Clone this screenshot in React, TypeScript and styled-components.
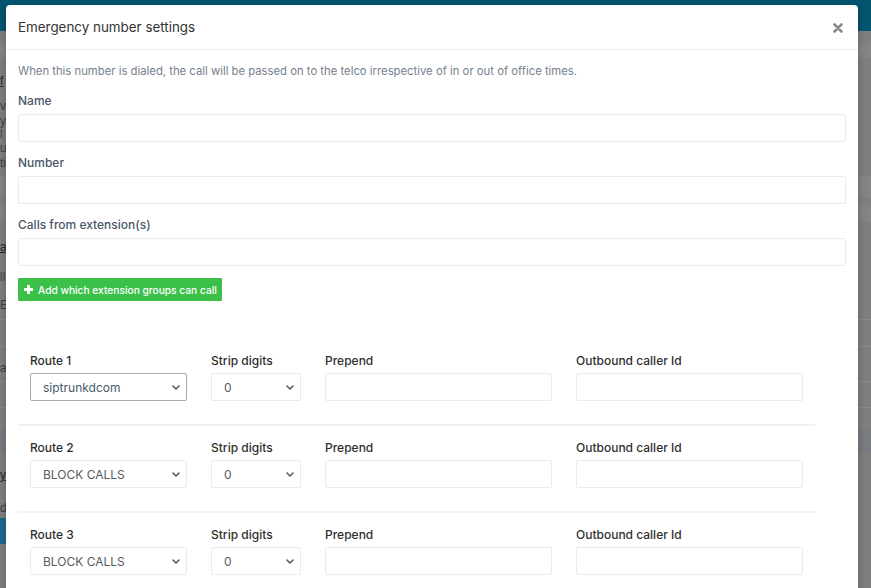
import React from 'react'
import styled, { createGlobalStyle } from 'styled-components'

const GlobalStyle = createGlobalStyle`
  html, body {
    margin: 0;
    padding: 0;
  }
  body {
    font-family: Inter, "Noto Sans", sans-serif;
    -webkit-font-smoothing: antialiased;
  }
  * {
    box-sizing: border-box;
  }
`

interface BackRow {
  h: number
  tone?: 'light' | 'dark'
  line?: boolean
  text?: string
  underline?: boolean
  button?: boolean
}

// the dimmed page behind the modal, only its left edge peeks out
const backRows: BackRow[] = [
  { h: 12 },
  { h: 15, tone: 'light' },
  { h: 15 },
  { h: 15, text: 'f', underline: true },
  { h: 10 },
  { h: 15, text: 'v' },
  { h: 15, text: 'y' },
  { h: 12, text: 'l' },
  { h: 15, text: 'u' },
  { h: 15, text: 'ti' },
  { h: 6 },
  { h: 22, tone: 'light' },
  { h: 7 },
  { h: 17, tone: 'light' },
  { h: 17 },
  { h: 16, text: 'a', underline: true },
  { h: 14 },
  { h: 16, text: 'll' },
  { h: 12 },
  { h: 16, text: 'E' },
  { h: 7, line: true },
  { h: 27, line: true },
  { h: 13 },
  { h: 16, text: 'a' },
  { h: 6, line: true },
  { h: 26, line: true },
  { h: 22 },
  { h: 22, tone: 'dark' },
  { h: 15 },
  { h: 16, text: 'y', underline: true },
  { h: 17 },
  { h: 16, text: 'd,' },
  { h: 2 },
  { h: 26, button: true },
]

interface Route {
  name: string
  trunk: string
  strip: string
}

const routes: Route[] = [
  { name: 'Route 1', trunk: 'siptrunkdcom', strip: '0' },
  { name: 'Route 2', trunk: 'BLOCK CALLS', strip: '0' },
  { name: 'Route 3', trunk: 'BLOCK CALLS', strip: '0' },
]

const Chevron = () => (
  <ChevronSvg width="8" height="5" viewBox="0 0 8 5">
    <path d="M1 1 L4 4 L7 1" fill="none" stroke="#555" strokeWidth="1.5" strokeLinecap="round" strokeLinejoin="round" />
  </ChevronSvg>
)

const SelectBox = (props: { value: string; active?: boolean; width: number }) => (
  <SelectWrap style={{ width: props.width }}>
    <Select value={props.value} onChange={() => {}} $active={props.active}>
      <option value={props.value}>{props.value}</option>
    </Select>
    <Chevron />
  </SelectWrap>
)

const App = () => {
  return (
    <>
      <GlobalStyle />
      <Page>
        <TopBar />
        {backRows.map((r, i) => (
          <BackLine key={i} $h={r.h} $tone={r.tone} $line={r.line}>
            {r.text && <BackText $underline={r.underline}>{r.text}</BackText>}
            {r.button && <BackButton />}
          </BackLine>
        ))}

        <Modal>
          <ModalHeader>
            <Title>Emergency number settings</Title>
            <CloseButton>
              <svg width="10" height="10" viewBox="0 0 10 10">
                <path d="M1.5 1.5 L8.5 8.5 M8.5 1.5 L1.5 8.5" stroke="#8a8a8a" strokeWidth="2.6" strokeLinecap="round" />
              </svg>
            </CloseButton>
          </ModalHeader>

          <ModalBody>
            <Hint>
              When this number is dialed, the call will be passed on to the telco irrespective of in or out of office
              times.
            </Hint>

            <Field>
              <Label>Name</Label>
              <TextInput />
            </Field>
            <Field>
              <Label>Number</Label>
              <TextInput />
            </Field>
            <Field>
              <Label>Calls from extension(s)</Label>
              <TextInput />
            </Field>

            <AddButton>
              <PlusIcon width="9" height="9" viewBox="0 0 9 9">
                <path d="M4.5 0 V9 M0 4.5 H9" stroke="#fff" strokeWidth="2.8" />
              </PlusIcon>
              Add which extension groups can call
            </AddButton>

            <Routes>
              {routes.map((route, i) => (
                <RouteRow key={route.name} $first={i === 0}>
                  <RouteCol>
                    <RouteLabel>{route.name}</RouteLabel>
                    <SelectBox value={route.trunk} active={i === 0} width={157} />
                  </RouteCol>
                  <RouteCol>
                    <RouteLabel>Strip digits</RouteLabel>
                    <SelectBox value={route.strip} width={90} />
                  </RouteCol>
                  <RouteCol>
                    <RouteLabel>Prepend</RouteLabel>
                    <RouteInput />
                  </RouteCol>
                  <RouteCol>
                    <RouteLabel>Outbound caller Id</RouteLabel>
                    <RouteInput />
                  </RouteCol>
                </RouteRow>
              ))}
            </Routes>
          </ModalBody>
        </Modal>
      </Page>
    </>
  )
}

const Page = styled.div`
  position: relative;
  width: 871px;
  height: 588px;
  overflow: hidden;
  background: #7f7f7f;
`

const TopBar = styled.div`
  height: 31px;
  background: #055470;
`

const BackLine = styled.div<{ $h: number; $tone?: 'light' | 'dark'; $line?: boolean }>`
  height: ${p => p.$h}px;
  display: flex;
  align-items: center;
  background: ${p => (p.$tone === 'light' ? '#858585' : p.$tone === 'dark' ? '#787c80' : 'transparent')};
  border-bottom: ${p => (p.$line ? '1px solid #8b8b8b' : 'none')};
  font-family: "Liberation Sans", sans-serif;
  font-size: 12px;
  line-height: 14px;
  overflow: hidden;
`

const BackText = styled.span<{ $underline?: boolean }>`
  color: ${p => (p.$underline ? '#262626' : '#3f3f3f')};
  text-decoration: ${p => (p.$underline ? 'underline' : 'none')};
  white-space: nowrap;
`

const BackButton = styled.div`
  width: 60px;
  height: 26px;
  background: #1e6990;
`

const Modal = styled.div`
  position: absolute;
  top: 5px;
  left: 6px;
  width: 852px;
  height: 620px;
  background: #fff;
  border-radius: 4px 4px 0 0;
  box-shadow: 0 2px 8px rgba(0, 0, 0, 0.25);
`

const ModalHeader = styled.div`
  height: 45px;
  display: flex;
  align-items: center;
  justify-content: space-between;
  padding: 0 12px 0 12px;
  border-bottom: 1px solid #ebeef1;
`

const Title = styled.h4`
  margin: 0;
  font-size: 13.4px;
  font-weight: 400;
  color: #333;
`

const CloseButton = styled.div`
  display: flex;
  align-items: center;
  padding: 2px 3px 0 0;
`

const ModalBody = styled.div`
  padding: 12px 12px 0 12px;
  display: flex;
  flex-direction: column;
  align-items: flex-start;
`

const Hint = styled.p`
  margin: 0 0 12px 0;
  font-size: 11.3px;
  line-height: 18px;
  color: #75818e;
`

const Field = styled.div`
  width: 100%;
  display: flex;
  flex-direction: column;
  gap: 4px;
  margin-bottom: 12px;
`

const Label = styled.label`
  font-size: 12px;
  line-height: 18px;
  font-weight: 500;
  color: #4b5868;
`

const TextInput = styled.input`
  width: 100%;
  height: 28px;
  border: 1px solid #ebebeb;
  border-radius: 2px;
  background: #fff;
  outline: none;
`

const AddButton = styled.button`
  display: flex;
  align-items: center;
  gap: 5px;
  height: 23px;
  width: 204px;
  padding: 0 6px;
  border: none;
  border-radius: 1px;
  background: #3bc14a;
  color: #fff;
  font-family: inherit;
  font-size: 10.2px;
  font-weight: 500;
  white-space: nowrap;
`

const PlusIcon = styled.svg`
  flex-shrink: 0;
`

const Routes = styled.div`
  width: 797px;
  margin-top: 38px;
  display: flex;
  flex-direction: column;
`

const RouteRow = styled.div<{ $first?: boolean }>`
  display: flex;
  gap: 24px;
  padding: 13px 12px 23px 12px;
  border-top: ${p => (p.$first ? 'none' : '2px solid #eff3f7')};
`

const RouteCol = styled.div`
  display: flex;
  flex-direction: column;
  gap: 3px;
`

const RouteLabel = styled.label`
  font-size: 12px;
  line-height: 18px;
  font-weight: 500;
  color: #2f2f2f;
`

const SelectWrap = styled.div`
  position: relative;
  height: 28px;
`

const Select = styled.select<{ $active?: boolean }>`
  appearance: none;
  width: 100%;
  height: 28px;
  padding: 0 20px 0 12px;
  border: 1px solid ${p => (p.$active ? '#a9a9a9' : '#ebebeb')};
  border-radius: 2px;
  background: #fff;
  font-family: inherit;
  font-size: 12px;
  color: ${p => (p.$active ? '#4a5a6c' : '#555b61')};
  outline: none;
`

const ChevronSvg = styled.svg`
  position: absolute;
  right: 7px;
  top: 12px;
  pointer-events: none;
`

const RouteInput = styled.input`
  width: 227px;
  height: 28px;
  border: 1px solid #ebebeb;
  border-radius: 2px;
  background: #fff;
  outline: none;
`

export default App
